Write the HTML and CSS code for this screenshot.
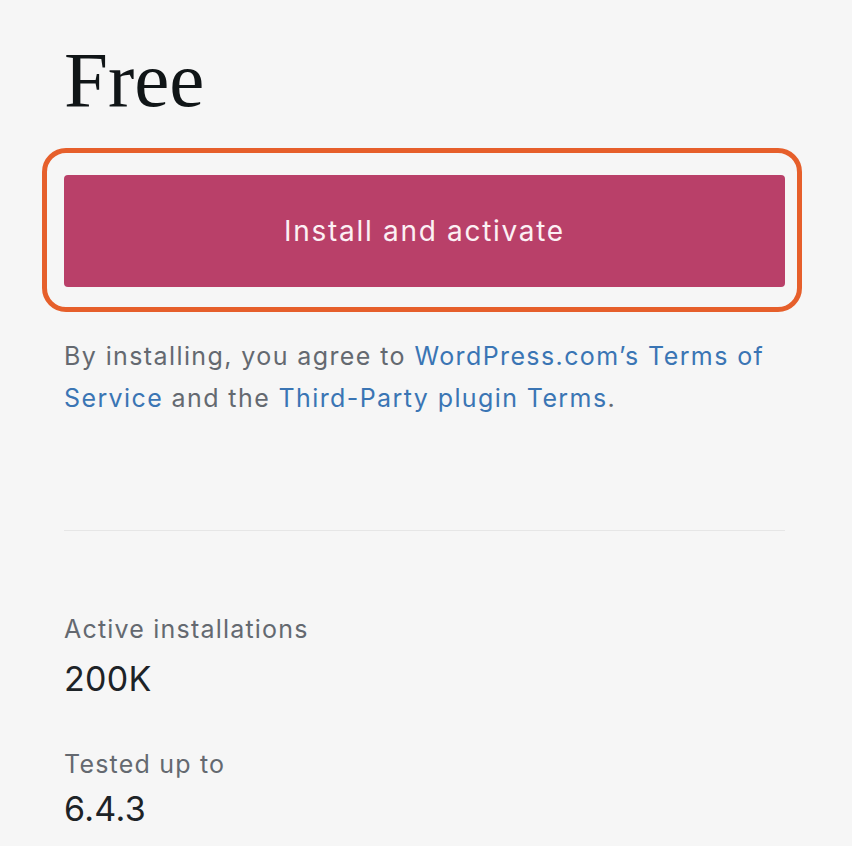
FILE: index.html
```html
<!DOCTYPE html>
<html lang="en">
<head>
    <meta charset="UTF-8">
    <meta name="viewport" content="width=device-width, initial-scale=1.0">
    <title>Plugin - Free</title>
    <link rel="stylesheet" href="styles.css">
</head>
<body>

<div class="sidebar">
    <h1 class="price">Free</h1>

    <!-- Highlighted install action -->
    <div class="highlight">
        <button class="install-btn">Install and activate</button>
    </div>

    <p class="terms">
        By installing, you agree to <a href="#">WordPress.com’s Terms of Service</a>
        and the <a href="#">Third-Party plugin Terms</a>.
    </p>

    <hr class="divider">

    <!-- Plugin details -->
    <dl class="details">
        <dt>Active installations</dt>
        <dd>200K</dd>
        <dt class="spaced">Tested up to</dt>
        <dd class="tight">6.4.3</dd>
    </dl>
</div>

</body>
</html>
```

FILE: styles.css
```css
/* Reset default margin and padding */
body, h1, p, dl, dt, dd {
    margin: 0;
    padding: 0;
}

body {
    background-color: #f6f6f6;
    font-family: Inter, "Noto Sans", Arial, sans-serif;
    color: #1d2327;
}

.sidebar {
    width: 721px;
    padding: 41px 0 0 64px;
}

/* Price heading */
.price {
    font-family: "Liberation Serif", "Times New Roman", serif;
    font-weight: normal;
    font-size: 79px;
    line-height: 78px;
    color: #101517;
    margin-bottom: 29px;
}

/* Orange ring around the button */
.highlight {
    margin-left: -22px;
    margin-right: -17px;
    padding: 22px 12px 20px 17px;
    border: 5px solid #e65f2b;
    border-radius: 24px;
}

.install-btn {
    display: block;
    width: 100%;
    height: 112px;
    background-color: #b94069;
    color: #fcf0f4;
    border: none;
    border-radius: 4px;
    font-family: Inter, "Noto Sans", Arial, sans-serif;
    font-size: 28px;
    letter-spacing: 1.7px;
    cursor: pointer;
}

.install-btn:hover {
    background-color: #a8375e;
}

/* Terms text */
.terms {
    margin-top: 23px;
    font-size: 25px;
    line-height: 42px;
    letter-spacing: 1.4px;
    color: #646970;
}

.terms a {
    color: #3a75b4;
    text-decoration: none;
}

.divider {
    margin: 111px 0 0;
    border: none;
    border-top: 1px solid #e6e6e6;
}

/* Details list */
.details {
    margin-top: 80px;
}

.details dt {
    font-size: 25px;
    line-height: 36px;
    letter-spacing: 1.2px;
    color: #646970;
}

.details dd {
    margin-top: 10px;
    font-size: 34px;
    line-height: 44px;
    letter-spacing: 0.3px;
    color: #1d2327;
}

.details dt.spaced {
    margin-top: 45px;
}

.details dd.tight {
    margin-top: 5px;
}
```
